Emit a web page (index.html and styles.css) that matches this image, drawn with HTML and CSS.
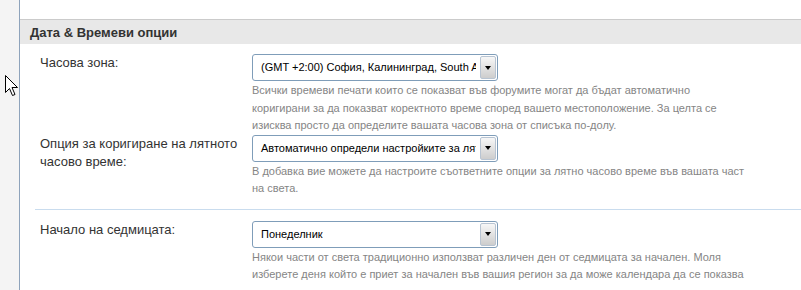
FILE: index.html
```html
<!DOCTYPE html>
<html lang="bg">
<head>
    <meta charset="UTF-8">
    <title>Дата &amp; Времеви опции</title>
    <link rel="stylesheet" href="styles.css">
</head>
<body>
    <div class="page">
        <div class="sidebar"></div>
        <div class="main">
            <h2 class="section-title">Дата &amp; Времеви опции</h2>

            <div class="group">
                <div class="row">
                    <div class="label">Часова зона:</div>
                    <div class="control">
                        <div class="select">
                            <span class="select-text">(GMT +2:00) София, Калининград, South Africa</span>
                            <span class="select-btn"><i class="arrow"></i></span>
                        </div>
                        <p class="desc">Всички времеви печати които се показват във форумите могат да бъдат автоматично<br>
                            коригирани за да показват коректното време според вашето местоположение. За целта се<br>
                            изисква просто да определите вашата часова зона от списъка по-долу.</p>
                    </div>
                </div>
                <div class="row">
                    <div class="label">Опция за коригиране на лятното часово време:</div>
                    <div class="control">
                        <div class="select">
                            <span class="select-text">Автоматично определи настройките за лятно часово време</span>
                            <span class="select-btn"><i class="arrow"></i></span>
                        </div>
                        <p class="desc">В добавка вие можете да настроите съответните опции за лятно часово време във вашата част<br>
                            на света.</p>
                    </div>
                </div>
            </div>

            <div class="group">
                <div class="row">
                    <div class="label">Начало на седмицата:</div>
                    <div class="control">
                        <div class="select">
                            <span class="select-text">Понеделник</span>
                            <span class="select-btn"><i class="arrow"></i></span>
                        </div>
                        <p class="desc">Някои части от света традиционно използват различен ден от седмицата за начален. Моля<br>
                            изберете деня който е приет за начален във вашия регион за да може календара да се показва<br>
                            коректно.</p>
                    </div>
                </div>
            </div>
        </div>
    </div>

    <!-- курсор на мишката -->
    <svg class="cursor" width="14" height="23" viewBox="0 0 14 23">
        <path d="M0.5 0.5 L0.5 17.5 L4.5 13.5 L7.5 20.5 L10 19.5 L7 12.5 L12.5 12.5 Z" fill="#fff" stroke="#000" stroke-width="1"/>
    </svg>
</body>
</html>
```

FILE: styles.css
```css
body {
    margin: 0;
    padding: 0;
    font-family: "Liberation Sans", Arial, sans-serif;
    background: #fff;
    color: #333;
    overflow: hidden;
}
.page {
    display: flex;
    width: 801px;
    height: 290px;
    overflow: hidden;
}
.sidebar {
    width: 19px;
    flex-shrink: 0;
    background: #f4f4f4;
    border-right: 1px solid #8ea3bb;
}
.main {
    flex: 1;
    padding-top: 19px;
}
.section-title {
    margin: 0;
    height: 24px;
    line-height: 25px;
    padding-left: 10px;
    font-size: 13px;
    font-weight: bold;
    color: #333;
    background: #e8e8e8;
    border-top: 1px solid #cbcbcb;
}
.group {
    margin-left: 15px;
    padding: 10px 0 11px;
    border-bottom: 1px solid #c9dcee;
}
.group:last-child {
    border-bottom: none;
    padding-top: 11px;
}
.row {
    display: grid;
    grid-template-columns: 217px 1fr;
}
.label {
    padding-left: 5px;
    padding-right: 10px;
    font-size: 13px;
    line-height: 18px;
    color: #333;
}
.select {
    display: flex;
    width: 246px;
    height: 27px;
    box-sizing: border-box;
    border: 1px solid #7f9db9;
    border-radius: 3px;
    background: #fff;
    overflow: hidden;
}
.select-text {
    flex: 1;
    margin-right: 4px;
    padding-left: 8px;
    font-size: 11px;
    line-height: 25px;
    color: #000;
    white-space: nowrap;
    overflow: hidden;
}
.select-btn {
    display: flex;
    align-items: center;
    justify-content: center;
    width: 14px;
    margin: 1px 1px 1px 0;
    border: 1px solid #b8c4d2;
    border-radius: 2px;
    background: linear-gradient(#f7f7f7, #cdcdcd);
}
.arrow {
    width: 0;
    height: 0;
    border-left: 3.5px solid transparent;
    border-right: 3.5px solid transparent;
    border-top: 4px solid #000;
}
.desc {
    margin: 1px 0 0;
    font-size: 11px;
    line-height: 17.5px;
    color: #858585;
    white-space: nowrap;
}
.cursor {
    position: absolute;
    left: 5px;
    top: 75px;
}
```
